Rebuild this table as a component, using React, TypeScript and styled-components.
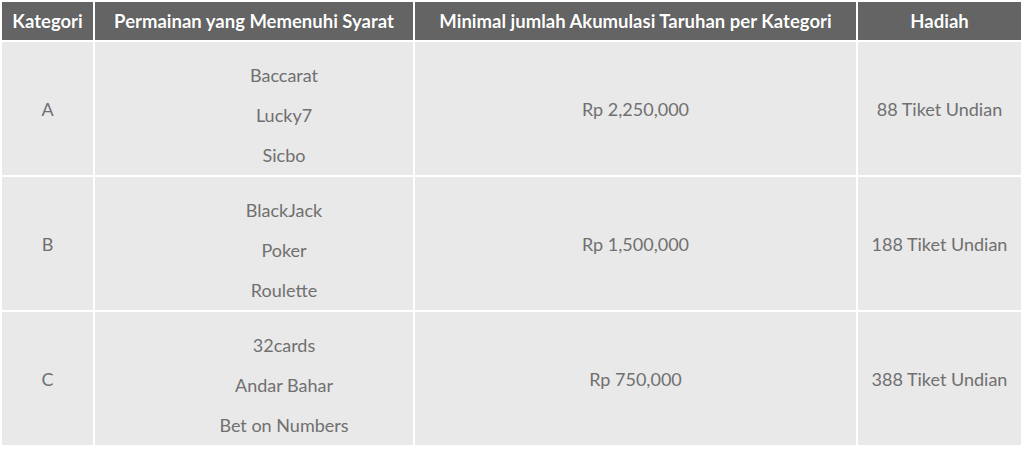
import React from "react";
import styled, { createGlobalStyle } from "styled-components";

const Global = createGlobalStyle`
  body {
    margin: 0;
    padding: 0;
    background: #ffffff;
    font-family: Lato, "Open Sans", sans-serif;
  }
`;

const Table = styled.table`
  width: 1023px;
  border-collapse: separate;
  border-spacing: 2px;
  table-layout: fixed;
`;

const HeadCell = styled.th<{ $w: number }>`
  width: ${(p) => p.$w}px;
  height: 38px;
  padding: 0;
  background: #646464;
  color: #ffffff;
  font-family: Lato, sans-serif;
  font-weight: 700;
  font-size: 18.5px;
  text-align: center;
  vertical-align: middle;
  white-space: nowrap;
  text-shadow: 0 0 1px rgba(0, 0, 0, 0.3);
`;

const Cell = styled.td`
  height: 133px;
  padding: 0;
  background: #e9e9e9;
  color: #707070;
  font-family: Lato, sans-serif;
  font-size: 18px;
  text-align: center;
  vertical-align: middle;
`;

const GameList = styled.div`
  display: flex;
  flex-direction: column;
  align-items: center;
  padding: 13px 0 0 60px;
`;

const Game = styled.span`
  display: block;
  line-height: 40px;
`;

const rows = [
  { cat: "A", games: ["Baccarat", "Lucky7", "Sicbo"], min: "Rp 2,250,000", prize: "88 Tiket Undian" },
  { cat: "B", games: ["BlackJack", "Poker", "Roulette"], min: "Rp 1,500,000", prize: "188 Tiket Undian" },
  { cat: "C", games: ["32cards", "Andar Bahar", "Bet on Numbers"], min: "Rp 750,000", prize: "388 Tiket Undian" },
];

export default function App() {
  return (
    <>
      <Global />
      <Table>
        <thead>
          <tr>
            <HeadCell $w={91}>Kategori</HeadCell>
            <HeadCell $w={318}>Permainan yang Memenuhi Syarat</HeadCell>
            <HeadCell $w={441}>Minimal jumlah Akumulasi Taruhan per Kategori</HeadCell>
            <HeadCell $w={163}>Hadiah</HeadCell>
          </tr>
        </thead>
        <tbody>
          {rows.map((r) => (
            <tr key={r.cat}>
              <Cell>{r.cat}</Cell>
              <Cell>
                <GameList>
                  {r.games.map((g) => (
                    <Game key={g}>{g}</Game>
                  ))}
                </GameList>
              </Cell>
              <Cell>{r.min}</Cell>
              <Cell>{r.prize}</Cell>
            </tr>
          ))}
        </tbody>
      </Table>
    </>
  );
}
